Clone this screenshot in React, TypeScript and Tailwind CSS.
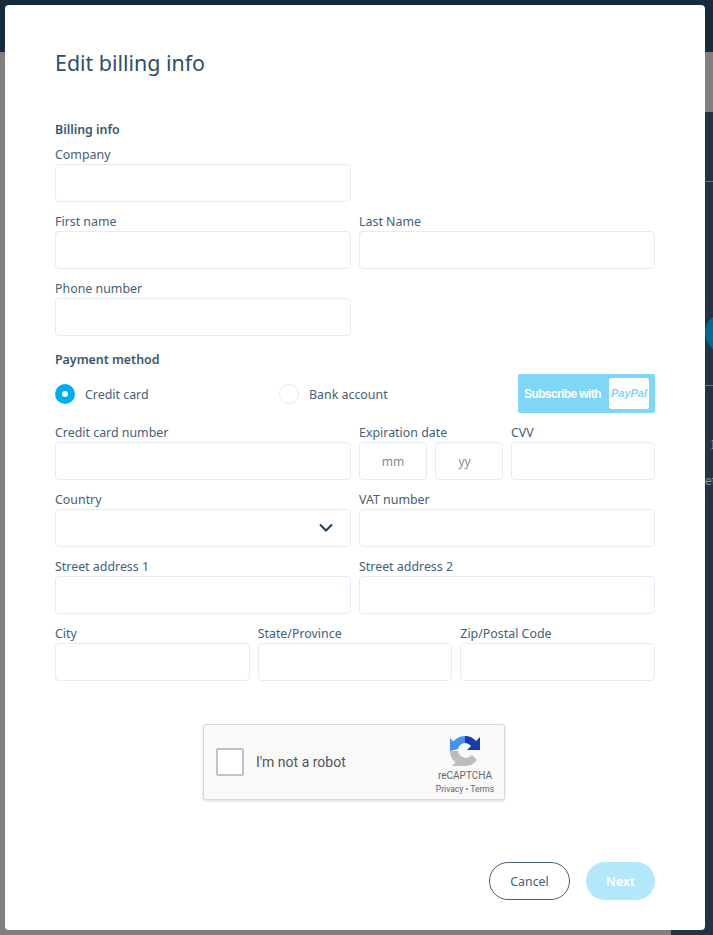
import { ReactNode } from "react";

// ---------- Helpers ----------
function Input({ children }: { children?: ReactNode }) {
  return (
    <div className="relative flex h-[38px] items-center justify-center rounded-[4px] border border-[#e8ebf5] bg-white pt-[1px] text-[12px] text-[#8a8a8a]">
      {children}
    </div>
  );
}

function Label({ children }: { children: ReactNode }) {
  return <div className="h-[19px] whitespace-nowrap text-[12.4px] leading-[20px] text-[#456078]">{children}</div>;
}

function Field({ label, children }: { label: string; children?: ReactNode }) {
  return (
    <div>
      <Label>{label}</Label>
      <Input>{children}</Input>
    </div>
  );
}

function RecaptchaLogo() {
  return (
    <svg width="32" height="32" viewBox="0 0 32 32">
      <path d="M16 1 A15 15 0 0 0 1.5 12 L1 14 L9 14 A8 8 0 0 1 16 8 Z" fill="#4a90f0" />
      <path d="M16 1 A15 15 0 0 1 27 6 L31 2 L31 15 L18 15 L22 11 A8 8 0 0 0 16 8 Z" fill="#1c3aa9" />
      <path d="M1 16 L1 3 L5 7 L9 14 Z" fill="#4a90f0" />
      <path d="M1 16 A15 15 0 0 0 16 31 A15 15 0 0 0 28 25 L23 20 A8 8 0 0 1 9 16 Z" fill="#bdbdbd" />
      <path d="M16 31 L3 31 L7 27 L12 24 Z" fill="#bdbdbd" />
    </svg>
  );
}

// page behind the dialog, only its edges show
function Backdrop() {
  return (
    <div className="flex h-full flex-col">
      <div className="h-[52px] shrink-0 bg-[#182b3c]" />
      <div className="flex flex-1">
        <div className="flex-1 bg-[#808080]" />
        <div className="flex w-[42px] flex-col">
          <div className="h-[60px] shrink-0 bg-[#808080]" />
          <div className="flex-1 bg-[#233444]">
            <div className="mt-[69px] h-px bg-[#67737e]" />
            <div className="ml-[34px] mt-[131px] h-[40px] w-[40px] rounded-full bg-[#006a8f]" />
            <div className="mt-[32px] h-px bg-[#67737e]" />
            <div className="ml-[40px] mt-[50px] text-[12px] leading-[18px] text-[#8a97a3]">I</div>
            <div className="ml-[34px] mt-[18px] text-[12px] leading-[18px] text-[#8a97a3]">et</div>
          </div>
        </div>
      </div>
    </div>
  );
}

// ---------- UI ----------
export default function App() {
  return (
    <div className="relative h-[935px] overflow-hidden font-['Noto_Sans',sans-serif]">
      <Backdrop />

      <div className="absolute left-[5px] top-[5px] flex h-[925px] w-[700px] flex-col rounded-[4px] bg-white px-[50px]">
        <h1 className="mt-[42px] text-[21.4px] leading-[32px] text-[#2f4f6b]">Edit billing info</h1>

        <div className="mt-[41px] text-[12.4px] font-semibold leading-[20px] text-[#3a5670]">Billing info</div>
        <div className="mt-[5px] grid grid-cols-2 gap-x-[8px] gap-y-[10px]">
          <Field label="Company" />
          <div />
          <Field label="First name" />
          <Field label="Last Name" />
          <Field label="Phone number" />
        </div>

        <div className="mt-[14px] text-[12.4px] font-semibold leading-[20px] text-[#3a5670]">Payment method</div>
        <div className="mt-[4px] grid h-[40px] grid-cols-[224px_239px_1fr] items-center">
          <div className="flex items-center gap-[10px]">
            <div className="flex h-[20px] w-[20px] items-center justify-center rounded-full bg-[#00aeef]">
              <div className="h-[6px] w-[6px] rounded-full bg-white" />
            </div>
            <span className="pt-[3px] text-[12.4px] text-[#456078]">Credit card</span>
          </div>
          <div className="flex items-center gap-[10px]">
            <div className="h-[20px] w-[20px] rounded-full border border-[#e8ebf5] bg-white" />
            <span className="pt-[3px] text-[12.4px] text-[#456078]">Bank account</span>
          </div>
          <div className="flex h-[39px] w-[137px] items-center justify-between self-start rounded-[2px] bg-[#80d6f7] px-[6px] font-['Liberation_Sans',sans-serif]">
            <span className="text-[12px] font-bold tracking-[-0.6px] text-white">Subscribe with</span>
            <span className="flex h-[31px] w-[40px] items-center justify-center rounded-[3px] bg-white text-[11px] font-bold italic text-[#80d6f7]">
              PayPal
            </span>
          </div>
        </div>

        <div className="mt-[9px] grid grid-cols-2 gap-x-[8px] gap-y-[10px]">
          <Field label="Credit card number" />
          <div className="grid grid-cols-[144px_144px] gap-x-[8px]">
            <div>
              <Label>Expiration date</Label>
              <div className="grid grid-cols-2 gap-x-[8px]">
                <Input>mm</Input>
                <Input>
                  <span className="mr-[9px]">yy</span>
                </Input>
              </div>
            </div>
            <Field label="CVV" />
          </div>
          <Field label="Country">
            <svg
              className="absolute right-[17px] top-[13px]"
              width="14"
              height="10"
              viewBox="0 0 14 10"
              fill="none"
              stroke="#1f3d5a"
              strokeWidth="2"
            >
              <path d="M1 1.5 L7 7.5 L13 1.5" />
            </svg>
          </Field>
          <Field label="VAT number" />
          <Field label="Street address 1" />
          <Field label="Street address 2" />
        </div>
        <div className="mt-[10px] grid grid-cols-3 gap-x-[8px]">
          <Field label="City" />
          <Field label="State/Province" />
          <Field label="Zip/Postal Code" />
        </div>

        <div className="mt-[43px] flex justify-center pr-[2px]">
          <div className="flex h-[76px] w-[302px] items-center rounded-[3px] border border-[#d9d9d9] bg-[#f9f9f9] pl-[12px] pr-[10px] font-['Roboto',sans-serif] shadow-[0_1px_3px_rgba(0,0,0,0.15)]">
            <div className="h-[28px] w-[28px] rounded-[2px] border-2 border-[#c1c1c1] bg-white" />
            <span className="ml-[12px] text-[14px] text-[#555555]">I'm not a robot</span>
            <div className="ml-auto flex w-[58px] flex-col items-center pt-[6px]">
              <RecaptchaLogo />
              <span className="mt-[3px] text-[10px] leading-[12px] text-[#666666]">reCAPTCHA</span>
              <span className="mt-[1px] whitespace-nowrap text-[8.5px] leading-[12px] text-[#666666]">Privacy • Terms</span>
            </div>
          </div>
        </div>

        <div className="mt-[62px] flex justify-end gap-[16px]">
          <button className="h-[38px] w-[81px] rounded-full border border-[#456078] bg-white pt-[3px] text-[12.4px] text-[#456078]">
            Cancel
          </button>
          <button className="h-[38px] w-[69px] rounded-full bg-[#b3e7fa] pt-[3px] text-[12.4px] font-semibold text-white">
            Next
          </button>
        </div>
      </div>
    </div>
  );
}
